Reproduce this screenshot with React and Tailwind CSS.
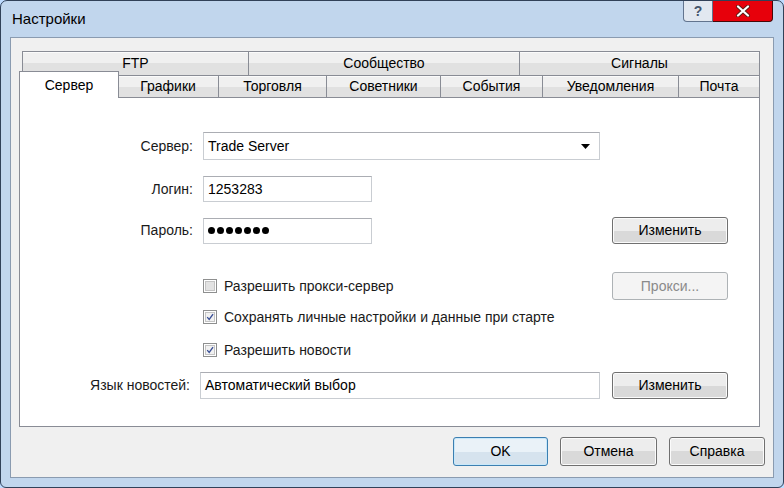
import React from "react";

// Win7-style "Настройки" dialog

const btn =
  "flex items-center justify-center rounded-[3px] border border-[#707070] bg-[#d9d9d9] shadow-[inset_0_0_0_1px_#fbfbfb,inset_0_13px_0_#ededed] text-[14px] text-black";

const tabBase =
  "flex items-center justify-center border-t border-l border-[#898c95] bg-[#e1e1e1] shadow-[inset_0_1px_0_#fbfbfb,inset_0_11px_0_#f0f0f0] text-[14px] text-black shrink-0";

const field =
  "border border-[#c9cdd2] border-t-[#abadb3] bg-white flex items-center pl-[4px] text-[14px] text-black";

const Checkbox = ({ checked }) => (
  <div className="w-[14px] h-[14px] border border-[#8e8f8f] bg-white p-px shrink-0">
    <div
      className={`w-full h-full border border-[#c4c4c4] flex items-center justify-center ${
        checked ? "bg-[#f1f1f1]" : "bg-[#e2e2e2]"
      }`}
    >
      {checked && (
        <svg width="10" height="10" viewBox="0 0 10 10">
          <path
            d="M1.5 5.2 L4 8 L8.8 1.5"
            fill="none"
            stroke="#3a4f96"
            strokeWidth="1.7"
          />
        </svg>
      )}
    </div>
  </div>
);

const Label = ({ w, children }) => (
  <div className={`${w} text-right pr-[10px] text-[14px] text-[#1a1a1a] shrink-0`}>
    {children}
  </div>
);

const App = () => {
  const row1 = [
    { name: "FTP", w: "w-[226px]" },
    { name: "Сообщество", w: "w-[271px]" },
    { name: "Сигналы", w: "w-[241px] border-r" },
  ];
  const row2 = [
    { name: "Графики", w: "w-[101px]" },
    { name: "Торговля", w: "w-[108px]" },
    { name: "Советники", w: "w-[114px]" },
    { name: "События", w: "w-[102px]" },
    { name: "Уведомления", w: "w-[136px]" },
    { name: "Почта", w: "w-[82px] border-r" },
  ];

  return (
    <div className="w-[784px] h-[488px] bg-blue-200 font-['Liberation_Sans',Arial,sans-serif]">
      <div className="relative w-[784px] h-[488px] rounded-t-[7px] rounded-b-[6px] border border-slate-700 bg-blue-200 shadow-[inset_0_0_0_400px_rgb(193,214,237)] px-[9px] pb-[9px] flex flex-col">
        {/* title bar */}
        <div className="h-[36px] flex items-center pl-[2px] text-[15px] text-black shrink-0">
          Настройки
        </div>

        {/* caption buttons */}
        <div className="absolute top-0 right-[10px] flex">
          <div className="w-[30px] h-[21px] rounded-bl-[4px] border border-t-0 border-slate-500 bg-slate-200 flex items-center justify-center text-[14px] font-bold text-slate-600">
            ?
          </div>
          <div className="w-[60px] h-[21px] rounded-br-[4px] border border-t-0 border-l-0 border-red-950 bg-red-600 flex items-center justify-center">
            <svg width="18" height="12" viewBox="0 0 18 12">
              <path d="M4 1.5 L14 10.5 M14 1.5 L4 10.5" stroke="#5b1d16" strokeWidth="4" strokeLinecap="round" />
              <path d="M4 1.5 L14 10.5 M14 1.5 L4 10.5" stroke="#ffffff" strokeWidth="2.2" strokeLinecap="round" />
            </svg>
          </div>
        </div>

        {/* client area */}
        <div className="flex-1 border border-[#8a9bb0] bg-[#f0f0f0] pl-[8px] pt-[13px] flex flex-col">
          {/* tab row 1 */}
          <div className="flex ml-[3px] h-[24px]">
            {row1.map((t) => (
              <div key={t.name} className={`${tabBase} ${t.w} h-[24px] pb-[1px]`}>
                {t.name}
              </div>
            ))}
          </div>

          {/* tab row 2 */}
          <div className="flex items-end h-[26px] -mt-[4px]">
            <div className="relative z-10 w-[100px] h-[27px] -mb-px -mr-[2px] border-t border-l border-r border-[#898c95] bg-white flex items-start justify-center pt-[3px] text-[14px] text-black shrink-0">
              Сервер
            </div>
            {row2.map((t) => (
              <div key={t.name} className={`${tabBase} ${t.w} h-[22px]`}>
                {t.name}
              </div>
            ))}
          </div>

          {/* panel */}
          <div className="w-[741px] h-[330px] border border-[#898c95] bg-white flex flex-col">
            <div className="flex items-center mt-[34px] h-[28px]">
              <Label w="w-[183px]">Сервер:</Label>
              <div className={`${field} w-[397px] h-[28px] justify-between pr-[9px]`}>
                <span>Trade Server</span>
                <svg width="9" height="5" viewBox="0 0 9 5">
                  <path d="M0 0 H9 L4.5 5 Z" fill="#000" />
                </svg>
              </div>
            </div>

            <div className="flex items-center mt-[16px] h-[26px]">
              <Label w="w-[183px]">Логин:</Label>
              <div className={`${field} w-[169px] h-[26px]`}>1253283</div>
            </div>

            <div className="flex items-center mt-[15px] h-[27px]">
              <Label w="w-[183px]">Пароль:</Label>
              <div className={`${field} w-[169px] h-[26px] gap-[2px] pl-[4px]`}>
                {[0, 1, 2, 3, 4, 5, 6].map((i) => (
                  <span key={i} className="w-[7px] h-[7px] rounded-full bg-black" />
                ))}
              </div>
              <div className={`${btn} ml-[240px] w-[116px] h-[27px]`}>Изменить</div>
            </div>

            <div className="flex items-center mt-[28px] h-[28px]">
              <div className="w-[183px] shrink-0" />
              <Checkbox checked={false} />
              <span className="ml-[7px] w-[388px] text-[14px] text-[#1a1a1a]">Разрешить прокси-сервер</span>
              <div className="flex items-center justify-center w-[116px] h-[28px] rounded-[3px] border border-[#adb2b5] bg-[#f4f4f4] text-[14px] text-[#8a8a8a]">
                Прокси...
              </div>
            </div>

            <div className="flex items-center mt-[10px] h-[14px]">
              <div className="w-[183px] shrink-0" />
              <Checkbox checked />
              <span className="ml-[7px] text-[14px] text-[#1a1a1a]">
                Сохранять личные настройки и данные при старте
              </span>
            </div>

            <div className="flex items-center mt-[19px] h-[14px]">
              <div className="w-[183px] shrink-0" />
              <Checkbox checked />
              <span className="ml-[7px] text-[14px] text-[#1a1a1a]">Разрешить новости</span>
            </div>

            <div className="flex items-center mt-[15px] h-[27px]">
              <Label w="w-[180px]">Язык новостей:</Label>
              <div className={`${field} w-[400px] h-[27px]`}>Автоматический выбор</div>
              <div className={`${btn} ml-[12px] w-[116px] h-[27px]`}>Изменить</div>
            </div>
          </div>

          {/* dialog buttons */}
          <div className="flex mt-[10px] ml-[434px] gap-[12px]">
            <div className="flex items-center justify-center rounded-[3px] border border-[rgb(60,127,177)] bg-[rgb(214,227,238)] shadow-[inset_0_0_0_1px_rgb(200,232,250),inset_0_14px_0_rgb(234,242,248)] text-[14px] text-black w-[95px] h-[29px]">
              OK
            </div>
            <div className={`${btn} w-[97px] h-[29px]`}>Отмена</div>
            <div className={`${btn} w-[96px] h-[29px]`}>Справка</div>
          </div>
        </div>
      </div>
    </div>
  );
};

export default App;
